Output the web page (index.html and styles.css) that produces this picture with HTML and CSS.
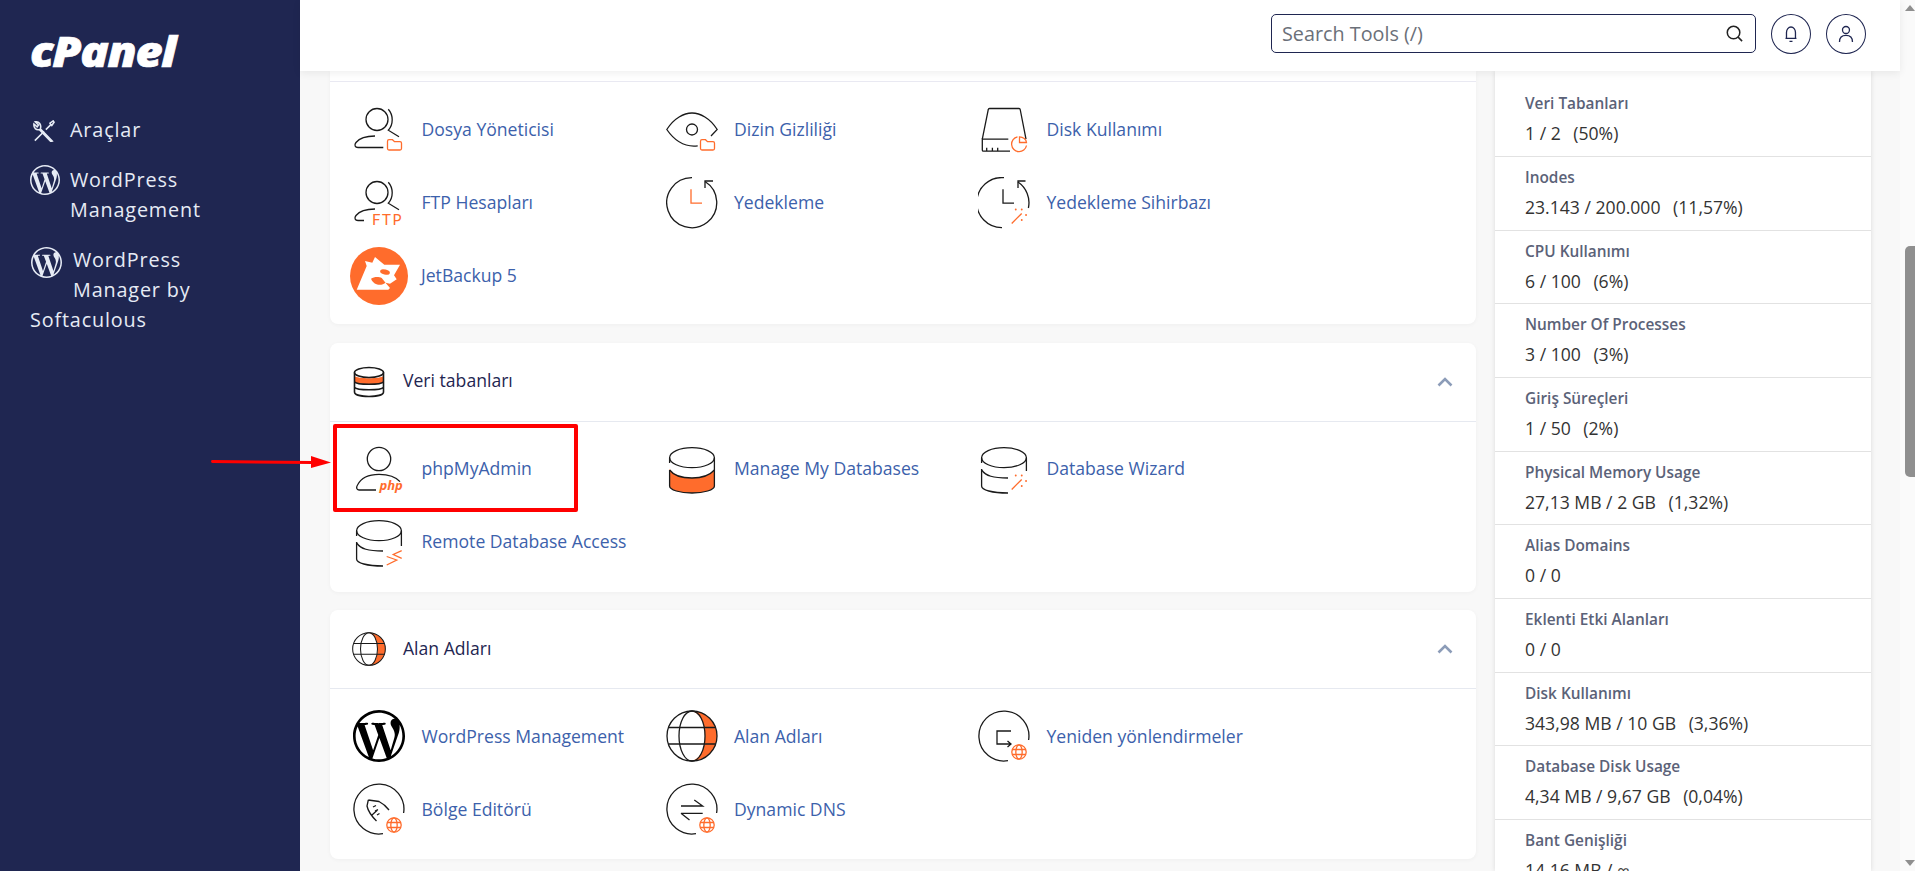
FILE: index.html
```html
<!DOCTYPE html>
<html lang="tr">
<head>
    <meta charset="UTF-8">
    <meta name="viewport" content="width=device-width, initial-scale=1.0">
    <title>cPanel - Araçlar</title>
    <link rel="stylesheet" href="styles.css">
</head>
<body>
    <!-- ortak ikon parcalari -->
    <svg class="defs" aria-hidden="true">
        <defs>
            <symbol id="wp" viewBox="0 0 24 24">
                <path d="M21.469 6.825c.84 1.537 1.318 3.3 1.318 5.175 0 3.979-2.156 7.456-5.363 9.325l3.295-9.527c.615-1.54.82-2.771.82-3.864 0-.405-.026-.78-.07-1.11m-7.981.105c.647-.03 1.232-.105 1.232-.105.582-.075.514-.93-.067-.899 0 0-1.755.135-2.88.135-1.064 0-2.85-.15-2.85-.15-.585-.03-.661.855-.075.885 0 0 .54.061 1.125.09l1.68 4.605-2.37 7.08L5.354 6.9c.649-.03 1.234-.1 1.234-.1.585-.075.516-.93-.065-.896 0 0-1.746.138-2.874.138-.2 0-.438-.008-.69-.015C4.911 3.15 8.235 1.215 12 1.215c2.809 0 5.365 1.072 7.286 2.833-.046-.003-.091-.009-.141-.009-1.06 0-1.812.923-1.812 1.914 0 .89.513 1.643 1.06 2.531.411.72.89 1.643.89 2.977 0 .915-.354 1.994-.821 3.479l-1.075 3.585-3.9-11.61.001.014zM12 22.784c-1.059 0-2.081-.153-3.048-.437l3.237-9.406 3.315 9.087c.024.053.05.101.078.149-1.12.393-2.325.609-3.582.609M1.211 12c0-1.564.336-3.05.935-4.39L7.29 21.709C3.694 19.96 1.212 16.271 1.211 12M12 0C5.385 0 0 5.385 0 12s5.385 12 12 12 12-5.385 12-12S18.615 0 12 0"/>
            </symbol>
            <g id="person2">
                <circle cx="24" cy="15.5" r="11"/>
                <path d="M35.3 5.2C40.5 11 40.5 20.5 35.3 26.2L46 32.8"/>
            </g>
            <path id="folder" class="orange" d="M34.5 37.5C34.5 36.2 35 35.7 36 35.7H39.5L41.5 37.7H47C48 37.7 48.5 38.2 48.5 39.2V44.5C48.5 45.5 48 46 47 46H36C35 46 34.5 45.5 34.5 44.5Z"/>
            <g id="miniglobe">
                <g class="orange">
                    <circle cx="41" cy="42" r="7.2"/>
                    <ellipse cx="41" cy="42" rx="3.2" ry="7.2"/>
                    <path d="M34.3 39.5H47.7M34.3 44.5H47.7"/>
                </g>
            </g>
            <g id="wand" class="orange">
                <path d="M33.7 46.5L43.7 36.5"/>
                <path class="dots" d="M37.7 32.5h.1M43.7 32.5h.1M48 38h.1M43.7 43h.1"/>
            </g>
            <path id="ring" d="M50.6 30A25 25 0 1 0 30 50.7"/>
            <ellipse id="dbtop" cx="26" cy="14.7" rx="22.4" ry="10"/>
        </defs>
    </svg>

    <div class="app">
        <aside class="sidebar">
            <div class="logo">cPanel</div>
            <nav class="nav">
                <a class="nav-item" href="#">
                    <svg class="nav-icon tools" viewBox="0 0 24 24">
                        <path d="M2 22.5L12 12.5M14 10.5L19.5 5M19.5 5L18.5 3.5L22 1L23 2.5L20.5 6Z"/>
                        <path d="M21 23L8 9.5C9.5 5.5 6.5 1 2.5 2L6 5.5L4.5 7.5L1 4.5C.5 8.5 3.5 11.5 7 10.5L19.5 23.5Z"/>
                    </svg>
                    <span>Araçlar</span>
                </a>
                <a class="nav-item" href="#">
                    <svg class="nav-icon"><use href="#wp"/></svg>
                    <span>WordPress<br>Management</span>
                </a>
                <a class="nav-item nav-wrap" href="#">
                    <svg class="nav-icon"><use href="#wp"/></svg>
                    WordPress Manager&nbsp;by Softaculous
                </a>
            </nav>
        </aside>

        <div class="main">
            <header class="topbar">
                <div class="search">
                    <span class="search-text">Search Tools (/)</span>
                    <svg class="search-icon" viewBox="0 0 20 20">
                        <circle cx="9" cy="9" r="6.6"/>
                        <path d="M13.8 13.8L18 18"/>
                    </svg>
                </div>
                <button class="round-btn">
                    <svg viewBox="0 0 20 20">
                        <path d="M4.5 14.5H15.5M5.5 14.5V8.5C5.5 5.5 7.5 3 10 3C12.5 3 14.5 5.5 14.5 8.5V14.5M8.5 17.5H11.5"/>
                    </svg>
                </button>
                <button class="round-btn">
                    <svg viewBox="0 0 20 20">
                        <circle cx="10" cy="6" r="3.5"/>
                        <path d="M3.5 18C3.5 13.5 6 11.5 10 11.5C14 11.5 16.5 13.5 16.5 18"/>
                    </svg>
                </button>
            </header>

            <div class="content">
                <div class="tools">
                    <!-- Dosyalar (ust kismi kaydirilmis) -->
                    <section class="card card-cut">
                        <div class="grid">
                            <a class="tool" href="#">
                                <svg class="icon" viewBox="0 0 52 52">
                                    <use href="#person2"/>
                                    <path d="M30.3 43.5H5C2 43.5 1 41 3 38.5C7 33.5 15 32 22 32"/>
                                    <use href="#folder"/>
                                </svg>
                                <span>Dosya Yöneticisi</span>
                            </a>
                            <a class="tool" href="#">
                                <svg class="icon" viewBox="0 0 52 52">
                                    <path d="M31.7 41.8C18 43.5 8 36 .8 25.5C8 14 18 9 26 9C34 9 44 14 51.2 25.5L45 32"/>
                                    <circle cx="26" cy="25.5" r="5.5"/>
                                    <use href="#folder"/>
                                </svg>
                                <span>Dizin Gizliliği</span>
                            </a>
                            <a class="tool" href="#">
                                <svg class="icon" viewBox="0 0 52 52">
                                    <path d="M4.3 35.2L10.3 5.5C10.4 4.8 10.8 4.5 11.5 4.5H41C41.7 4.5 42.1 4.8 42.2 5.5L48 35.2"/>
                                    <path d="M30.3 35.2H4.3V46C4.3 46.7 4.7 47.2 5.5 47.2H32"/>
                                    <path d="M8.7 43.7V47M14.4 43.7V47M19.7 43.7V47"/>
                                    <g class="orange">
                                        <path d="M39.5 32.8A7.5 7.5 0 1 0 48.5 41.5"/>
                                        <path d="M41.5 32.8V38.5H48.5C48.5 35.5 45 32.8 41.5 32.8Z"/>
                                    </g>
                                </svg>
                                <span>Disk Kullanımı</span>
                            </a>
                            <a class="tool" href="#">
                                <svg class="icon" viewBox="0 0 52 52">
                                    <use href="#person2"/>
                                    <path d="M11 43.5H5C2 43.5 1 41 3 38.5C7 33.5 15 32 22 32"/>
                                    <text class="icon-text" x="19" y="47.5">FTP</text>
                                </svg>
                                <span>FTP Hesapları</span>
                            </a>
                            <a class="tool" href="#">
                                <svg class="icon" viewBox="0 0 52 52">
                                    <path d="M26 .7A25 25 0 1 0 39 4.5"/>
                                    <path d="M39 11V4H47"/>
                                    <path class="orange" d="M25 12.2V26.2H36"/>
                                </svg>
                                <span>Yedekleme</span>
                            </a>
                            <a class="tool" href="#">
                                <svg class="icon" viewBox="0 0 52 52">
                                    <path d="M26 .7A25 25 0 1 0 24 50.6"/>
                                    <path d="M50.4 31A25 25 0 0 0 40 5"/>
                                    <path d="M40 11V4H47.5"/>
                                    <path d="M25 12.2V26.2H36"/>
                                    <use href="#wand"/>
                                </svg>
                                <span>Yedekleme Sihirbazı</span>
                            </a>
                            <a class="tool tool-jet" href="#">
                                <svg class="icon-jet" viewBox="0 0 58 58">
                                    <circle class="jet-bg" cx="29" cy="29" r="29"/>
                                    <path class="jet-head" d="M6.7 42.7L16.7 19L15 14L22.3 15.7L25 10L34.3 17.7H50L44 28.3L46.7 32.3L40 36.7L35.5 35.7L40 41L38.3 42.7Z"/>
                                    <ellipse class="jet-bg" cx="35" cy="25" rx="5" ry="2.5" transform="rotate(15 35 25)"/>
                                    <path class="jet-bg" d="M21 31.7C24 29.5 29 29.5 31.7 31L35.5 35.7C32 38.8 24 39 21 31.7Z"/>
                                </svg>
                                <span>JetBackup 5</span>
                            </a>
                        </div>
                    </section>

                    <section class="card">
                        <div class="card-head">
                            <svg class="head-icon" viewBox="0 0 34 34">
                                <path class="fill-orange" d="M2.5 11C5 14 29 14 31.5 11V17C29 20 5 20 2.5 17Z"/>
                                <ellipse cx="17" cy="7.5" rx="14.5" ry="5"/>
                                <path d="M2.5 7.5V27C2.5 33 31.5 33 31.5 27V7.5"/>
                                <path d="M2.5 17C5 20 29 20 31.5 17M2.5 22.5C5 25.5 29 25.5 31.5 22.5"/>
                            </svg>
                            <h3>Veri tabanları</h3>
                            <svg class="chevron" viewBox="0 0 16 10"><path d="M1.5 8.5L8 2L14.5 8.5"/></svg>
                        </div>
                        <div class="grid">
                            <a class="tool" href="#">
                                <svg class="icon" viewBox="0 0 52 52">
                                    <circle cx="26" cy="16" r="11.7"/>
                                    <path d="M23 47H6C3.5 47 3 44.5 4.5 42C8.5 34 18 31.3 26 31.3C35 31.3 43 34 47 38.7"/>
                                    <text class="icon-php" x="26.5" y="47">php</text>
                                </svg>
                                <span>phpMyAdmin</span>
                            </a>
                            <a class="tool" href="#">
                                <svg class="icon" viewBox="0 0 52 52">
                                    <path class="fill-orange" d="M3.6 26C8 32 15 35 26 35C37 35 44 32 48.4 27V43C48.4 47 38 50 26 50C14 50 3.6 47 3.6 43Z"/>
                                    <use href="#dbtop"/>
                                    <path d="M48.4 14.7V43C48.4 47 38 50 26 50C14 50 3.6 47 3.6 43V27M3.6 14.7V20"/>
                                    <path d="M3.6 27C8 33 15 35 26 35C37 35 44 32 48.4 27"/>
                                </svg>
                                <span>Manage My Databases</span>
                            </a>
                            <a class="tool" href="#">
                                <svg class="icon" viewBox="0 0 52 52">
                                    <use href="#dbtop"/>
                                    <path d="M48.4 14.7V28M3.6 14.7V20M3.6 26V43C3.6 47 14 50 30 50"/>
                                    <path d="M3.6 27C8 33 15 35 30 35"/>
                                    <use href="#wand"/>
                                </svg>
                                <span>Database Wizard</span>
                            </a>
                            <a class="tool" href="#">
                                <svg class="icon" viewBox="0 0 52 52">
                                    <use href="#dbtop"/>
                                    <path d="M48.4 14.7V30M3.6 14.7V20M3.6 26V43C3.6 47 14 50 30 50"/>
                                    <path d="M3.6 27C8 33 15 35 30 35"/>
                                    <path class="orange" d="M33.7 40.5L43.7 44L33.7 49M48.7 34.7L40.3 38.5L48.7 42.3"/>
                                </svg>
                                <span>Remote Database Access</span>
                            </a>
                        </div>
                    </section>

                    <section class="card">
                        <div class="card-head">
                            <svg class="head-icon" viewBox="0 0 52 52">
                                <path class="fill-orange" d="M26 1A25 25 0 0 1 26 51C37 47 39 35 39 26C39 17 37 5 26 1Z"/>
                                <circle cx="26" cy="26" r="25"/>
                                <ellipse cx="26" cy="26" rx="13" ry="25"/>
                                <path d="M2.5 17.5H49.5M2.5 34H49.5"/>
                            </svg>
                            <h3>Alan Adları</h3>
                            <svg class="chevron" viewBox="0 0 16 10"><path d="M1.5 8.5L8 2L14.5 8.5"/></svg>
                        </div>
                        <div class="grid">
                            <a class="tool" href="#">
                                <svg class="icon icon-wp"><use href="#wp"/></svg>
                                <span>WordPress Management</span>
                            </a>
                            <a class="tool" href="#">
                                <svg class="icon" viewBox="0 0 52 52">
                                    <path class="fill-orange" d="M26 1A25 25 0 0 1 26 51C37 47 39 35 39 26C39 17 37 5 26 1Z"/>
                                    <circle cx="26" cy="26" r="25"/>
                                    <ellipse cx="26" cy="26" rx="13" ry="25"/>
                                    <path d="M2.5 17.5H49.5M2.5 34H49.5"/>
                                </svg>
                                <span>Alan Adları</span>
                            </a>
                            <a class="tool" href="#">
                                <svg class="icon" viewBox="0 0 52 52">
                                    <use href="#ring"/>
                                    <path d="M33 21H19V34H32.5M29.5 31L33 34L29.5 37"/>
                                    <use href="#miniglobe"/>
                                </svg>
                                <span>Yeniden yönlendirmeler</span>
                            </a>
                            <a class="tool" href="#">
                                <svg class="icon" viewBox="0 0 52 52">
                                    <use href="#ring"/>
                                    <path d="M15.3 17L26 18.5C30 20.5 33 23 36 27M15.3 17L14 23C15 28 17.5 32 23.5 38M20 24L23 22.5M22 28L25 26.5M24 32L26.5 30.5M19 32L24.5 27"/>
                                    <use href="#miniglobe"/>
                                </svg>
                                <span>Bölge Editörü</span>
                            </a>
                            <a class="tool" href="#">
                                <svg class="icon" viewBox="0 0 52 52">
                                    <use href="#ring"/>
                                    <path d="M15 23H36.7L28.3 17M15 30.3H36.7M15 30.3L23.5 37"/>
                                    <use href="#miniglobe"/>
                                </svg>
                                <span>Dynamic DNS</span>
                            </a>
                        </div>
                    </section>
                </div>

                <aside class="stats">
                    <div class="stat"><div class="stat-label">Veri Tabanları</div><div class="stat-value">1 / 2 <i>(50%)</i></div></div>
                    <div class="stat"><div class="stat-label">Inodes</div><div class="stat-value">23.143 / 200.000 <i>(11,57%)</i></div></div>
                    <div class="stat"><div class="stat-label">CPU Kullanımı</div><div class="stat-value">6 / 100 <i>(6%)</i></div></div>
                    <div class="stat"><div class="stat-label">Number Of Processes</div><div class="stat-value">3 / 100 <i>(3%)</i></div></div>
                    <div class="stat"><div class="stat-label">Giriş Süreçleri</div><div class="stat-value">1 / 50 <i>(2%)</i></div></div>
                    <div class="stat"><div class="stat-label">Physical Memory Usage</div><div class="stat-value">27,13 MB / 2 GB <i>(1,32%)</i></div></div>
                    <div class="stat"><div class="stat-label">Alias Domains</div><div class="stat-value">0 / 0</div></div>
                    <div class="stat"><div class="stat-label">Eklenti Etki Alanları</div><div class="stat-value">0 / 0</div></div>
                    <div class="stat"><div class="stat-label">Disk Kullanımı</div><div class="stat-value">343,98 MB / 10 GB <i>(3,36%)</i></div></div>
                    <div class="stat"><div class="stat-label">Database Disk Usage</div><div class="stat-value">4,34 MB / 9,67 GB <i>(0,04%)</i></div></div>
                    <div class="stat"><div class="stat-label">Bant Genişliği</div><div class="stat-value">14,16 MB / ∞</div></div>
                </aside>
            </div>
        </div>

        <div class="scrollbar">
            <div class="arrow-up"></div>
            <div class="thumb"></div>
            <div class="arrow-down"></div>
        </div>
    </div>

    <!-- ekran goruntusu uzerindeki isaretleme -->
    <div class="mark-box"></div>
    <svg class="mark-arrow" viewBox="0 0 120 14">
        <path d="M1.5 6.5L102 7.5" />
        <polygon points="100,1 120,7.5 100,13"/>
    </svg>
</body>
</html>
```

FILE: styles.css
```css
* {
    box-sizing: border-box;
}
html, body {
    margin: 0;
    height: 100%;
    overflow: hidden;
}
body {
    font-family: "Open Sans", sans-serif;
    background-color: #f8f8f8;
    color: #333;
}
a {
    text-decoration: none;
}
.defs {
    position: absolute;
    width: 0;
    height: 0;
}
.app {
    display: flex;
    height: 100vh;
}

/* sol menu */
.sidebar {
    width: 300px;
    flex-shrink: 0;
    padding: 24px 20px 0 30px;
    background-color: #1f2651;
}
.logo {
    height: 91px;
    font-size: 42px;
    font-weight: 800;
    font-style: italic;
    line-height: 54px;
    letter-spacing: -1.2px;
    color: #fff;
    -webkit-text-stroke: .7px #fff;
    transform: scaleX(1.12);
    transform-origin: left center;
}
.nav-item {
    display: flex;
    gap: 10px;
    margin-bottom: 20px;
    font-size: 19.8px;
    line-height: 30px;
    letter-spacing: .85px;
    color: #e6ebf5;
}
.nav-icon {
    width: 30px;
    height: 30px;
    flex-shrink: 0;
    fill: #e6ebf5;
}
.nav-icon.tools {
    width: 22px;
    height: 22px;
    margin: 5px 5px 0 3px;
    fill: none;
    stroke: #e6ebf5;
    stroke-width: 1.7;
}
.nav-wrap {
    display: block;
    width: 175px;
}
.nav-wrap .nav-icon {
    float: left;
    width: 31px;
    height: 31px;
    margin: 2px 11px 20px 1px;
}

/* ust bar */
.main {
    flex: 1;
    min-width: 0;
    display: flex;
    flex-direction: column;
}
.topbar {
    position: relative;
    z-index: 2;
    height: 71px;
    flex-shrink: 0;
    display: flex;
    align-items: flex-start;
    gap: 15px;
    padding: 14px 34px 0 971px;
    background-color: #fff;
    box-shadow: 0 2px 8px rgba(0, 0, 0, 0.07);
}
.search {
    width: 486px;
    height: 39px;
    display: flex;
    align-items: center;
    justify-content: space-between;
    padding: 0 11px 0 10px;
    border: 1px solid #1f2651;
    border-radius: 5px;
}
.search-text {
    font-size: 19.8px;
    color: #6b7079;
}
.search-icon {
    width: 19px;
    height: 19px;
    fill: none;
    stroke: #222;
    stroke-width: 1.6;
}
.round-btn {
    width: 40px;
    height: 40px;
    padding: 9px;
    border: 1px solid #1f2651;
    border-radius: 50%;
    background: none;
}
.round-btn svg {
    display: block;
    fill: none;
    stroke: #1f2651;
    stroke-width: 1.3;
}

/* icerik */
.content {
    flex: 1;
    min-height: 0;
    display: flex;
    gap: 19px;
    padding-left: 30px;
    overflow: hidden;
}
.tools {
    width: 1146px;
    flex-shrink: 0;
    display: flex;
    flex-direction: column;
    gap: 18.5px;
}
.card {
    background-color: #fff;
    border-radius: 8px;
    box-shadow: 0 1px 4px rgba(0, 0, 0, 0.04);
}
.card-cut {
    padding-top: 10px;
    border-radius: 0 0 8px 8px;
}
.card-head {
    height: 79px;
    display: flex;
    align-items: center;
    padding: 0 23px 0 22px;
    border-bottom: 1px solid #e6e9f0;
}
.head-icon {
    width: 34px;
    height: 34px;
    margin-right: 17px;
    fill: none;
    stroke: #1a1a1a;
    stroke-width: 1.6;
}
.card-head h3 {
    flex: 1;
    margin: 0 0 3px;
    font-size: 17.6px;
    font-weight: 400;
    color: #1f2651;
}
.chevron {
    width: 16px;
    height: 10px;
    fill: none;
    stroke: #8c9cb8;
    stroke-width: 2.6;
}
.grid {
    display: grid;
    grid-template-columns: repeat(3, 312.5px);
    grid-auto-rows: 73px;
    padding: 10.5px 0 13.5px 23px;
    align-items: center;
}
.card-cut .grid {
    padding-top: 11.5px;
    padding-bottom: 11.5px;
    border-top: 1px solid #e9e9f2;
}
.tool {
    display: flex;
    align-items: center;
    gap: 16.5px;
    font-size: 17.6px;
    color: #3c61ab;
}
.tool span {
    margin-bottom: 1px;
}
.card-cut .tool span {
    margin-bottom: 3px;
}
.tool-jet {
    gap: 13px;
    margin-left: -3px;
}
.icon {
    width: 52px;
    height: 52px;
    flex-shrink: 0;
    fill: none;
    stroke: #1a1a1a;
    stroke-width: 1.3;
}
.icon-wp {
    fill: #000;
    stroke: none;
}
.icon-jet {
    width: 58px;
    height: 58px;
    flex-shrink: 0;
}
.jet-bg {
    fill: #ff6c2c;
}
.jet-head {
    fill: #fff;
}
.orange {
    stroke: #ff6c2c;
}
.dots {
    stroke-width: 1.8;
    stroke-linecap: round;
}
.fill-orange {
    fill: #ff6c2c;
    stroke: none;
}
.icon-text {
    font-family: "Lato", sans-serif;
    font-size: 15px;
    letter-spacing: 1.6px;
    fill: #ff6c2c;
    stroke: none;
}
.icon-php {
    font-size: 13px;
    font-weight: 700;
    font-style: italic;
    fill: #ff6c2c;
    stroke: none;
}

/* sag panel */
.stats {
    width: 376px;
    flex-shrink: 0;
    padding-top: 12.3px;
    background-color: #fff;
    box-shadow: 0 0 5px rgba(0, 0, 0, 0.12);
}
.stat {
    height: 73.67px;
    padding: 11px 30px 0;
    border-bottom: 1px solid #e2e2e2;
}
.stat-label {
    font-size: 15.4px;
    font-weight: 600;
    line-height: 20px;
    color: #5b6278;
}
.stat-value {
    margin-top: 8px;
    font-size: 17.6px;
    line-height: 22px;
    color: #333;
}
.stat-value i {
    margin-left: 8px;
    font-style: normal;
}

/* kaydirma cubugu */
.scrollbar {
    position: relative;
    width: 15px;
    flex-shrink: 0;
    background-color: #fafafa;
}
.thumb {
    position: absolute;
    top: 246px;
    left: 5px;
    width: 10px;
    height: 231px;
    border-radius: 5px 0 0 5px;
    background-color: #8f8f8f;
}
.arrow-up, .arrow-down {
    position: absolute;
    right: 0;
    width: 0;
    height: 0;
    border-left: 5px solid transparent;
    border-right: 5px solid transparent;
}
.arrow-up {
    top: 5px;
    border-bottom: 6px solid #8f8f8f;
}
.arrow-down {
    bottom: 5px;
    border-top: 6px solid #8f8f8f;
}

/* kirmizi isaretleme */
.mark-box {
    position: absolute;
    top: 424px;
    left: 333px;
    width: 245px;
    height: 88px;
    border: 4px solid #f00;
    border-radius: 2px;
}
.mark-arrow {
    position: absolute;
    top: 455px;
    left: 211px;
    width: 120px;
    height: 14px;
    fill: #f00;
    stroke: #f00;
    stroke-width: 3;
    stroke-linecap: round;
}
.mark-arrow polygon {
    stroke: none;
}
```
